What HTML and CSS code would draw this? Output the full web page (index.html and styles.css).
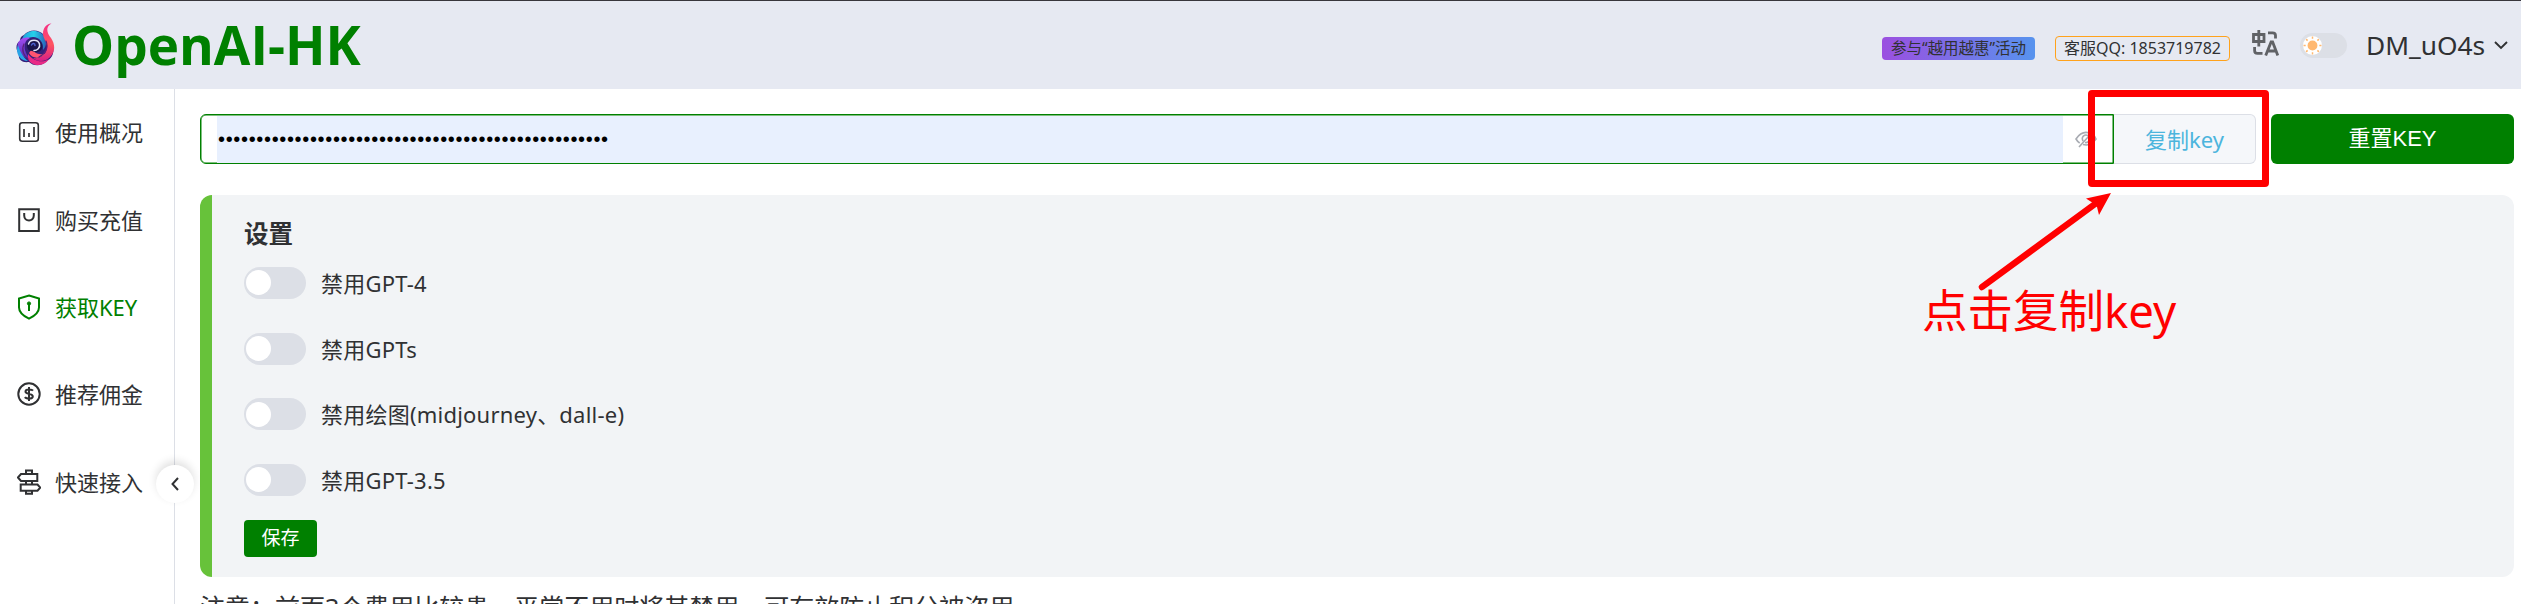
FILE: index.html
```html
<!DOCTYPE html>
<html lang="zh-CN">
<head>
<meta charset="utf-8">
<title>OpenAI-HK</title>
<link rel="stylesheet" href="styles.css">
</head>
<body>
<header class="topbar">
  <svg class="logo" viewBox="0 0 40 44" fill="none" stroke-linecap="round">
    <defs>
      <linearGradient id="cyan" x1="0" y1="0" x2="1" y2="0"><stop offset="0" stop-color="#1f9fd8"/><stop offset=".5" stop-color="#25d0ea"/><stop offset="1" stop-color="#2b62b8"/></linearGradient>
      <linearGradient id="pink" x1="0" y1="0" x2="0" y2="1"><stop offset="0" stop-color="#f52f86"/><stop offset=".55" stop-color="#ff5560"/><stop offset="1" stop-color="#d81d86"/></linearGradient>
      <linearGradient id="violet" x1="0" y1="0" x2="0" y2="1"><stop offset="0" stop-color="#a64df2"/><stop offset="1" stop-color="#4a2bb0"/></linearGradient>
    </defs>
    <path d="M8 12C13 6 23 6 28 12L36 20C39 28 37 35 31 38C25 44 17 43 13 39C5 40 2 36 3 31C-1 26 0 20 4 18C4 15 5 13 8 12Z" fill="#34207a"/>
    <path d="M7 14C12 6 25 6 29 15C31 20 30 24 27 27C28 19 23 14 17 14C13 14 9 16 6 20C5 18 6 16 7 14Z" fill="url(#cyan)"/>
    <path d="M35.500 .5C29 4 31 10 35 15C41 24 38 33 30 37C25 39 20 38 17 35C25 36 31 31 31 24C31 19 27 15 27 11C27 5 30 1 35.500 .5Z" fill="url(#pink)"/>
    <path d="M2 25C0 18 7 13 14 15C9 17 8 22 9 27C10 31 12 34 15 36C7 35 3 31 2 25Z" fill="url(#violet)"/>
    <path d="M2 22C-1 29 3 38 12 38C8 35 5 31 2 22Z" fill="#28a4e8"/>
    <path d="M12 36C16 44 28 44 33 36C27 40 18 39 12 31Z" fill="#e92a86"/>
    <path d="M13 30C16 36 24 36 29 31C25 32 19 31 16 26Z" fill="#ff5470"/>
    <path d="M8 21C5 27 8 33 12 36M30 18C33 25 29 31 23 34" stroke="#5b1f79" stroke-width="1.200"/>
    <path d="M11 22C12 15 23 14 26 21C28 28 21 31 16 28C12 28 11 25 11 22Z" fill="#1b164c"/>
    <path d="M12.500 21C14 16 22 16 23.500 21C24.500 25 21 27.500 18 27.500" stroke="#e7e9fb" stroke-width="1.500"/>
    <path d="M15.500 22C16.500 20 19 20 19 22.500" stroke="#4c62cf" stroke-width="1.500"/>
  </svg>
  <h1 class="brand">OpenAI-HK</h1>
  <div class="tools">
    <a class="promo">参与“越用越惠”活动</a>
    <span class="qq">客服QQ: 1853719782</span>
    <svg class="lang" viewBox="0 0 27 26" fill="none" stroke="#606266" stroke-width="2.8">
      <path d="M1.5 4.5H12V11.5H1.5ZM6.8 0V16.5"/>
      <path d="M16 2.8H20.5Q23.5 2.8 23.5 5.5V8.5M2.6 17V20.5Q2.6 23.4 5.5 23.4H10.5"/>
      <path d="M13.7 25.5L19.1 12H20.6L25.8 25.5M16 21H23.5"/>
    </svg>
    <span class="theme"><svg viewBox="0 0 19 19" stroke="#ffb870" stroke-width="1.5"><circle cx="9.5" cy="9.5" r="4.2" fill="#ffb870"/><path d="M9.5 .5V2.7M9.5 16.3V18.5M.5 9.5H2.7M16.3 9.5H18.5M3.1 3.1L4.6 4.6M14.4 14.4L15.9 15.9M3.1 15.9L4.6 14.4M14.4 4.6L15.9 3.1"/></svg></span>
    <span class="user">DM_uO4s</span>
    <svg class="caret" viewBox="0 0 14 9" fill="none" stroke="#303133" stroke-width="1.9"><path d="M1 1L7 7L13 1"/></svg>
  </div>
</header>
<div class="body">
  <nav class="side">
    <a class="item"><svg viewBox="0 0 24 24"><rect x="2.7" y="2.7" width="18.6" height="18.6" rx="2.5" stroke-width="1.6"/><path d="M7 9V17M12 13V17M17 7V17" stroke-width="1.7"/></svg>使用概况</a>
    <a class="item"><svg viewBox="0 0 24 24"><path d="M2.2 1.2H21.8V23H2.2Z"/><path d="M7.2 5V7.5C7.2 14 16.8 14 16.8 7.5V5"/></svg>购买充值</a>
    <a class="item active"><svg viewBox="0 0 24 26"><path d="M12 1.5L22 4.5V13.5C22 18.5 17.5 22 12 24.7C6.500 22 2 18.500 2 13.500V4.500Z"/><path d="M12 10V17"/><circle cx="12" cy="9.500" r="1.600" fill="currentColor" stroke-width="1"/></svg>获取KEY</a>
    <a class="item"><svg viewBox="0 0 24 24"><circle cx="12" cy="12" r="10.700"/><path d="M16 8.700C15 7.300 8.500 6.800 8.500 9.700C8.500 12.300 15.800 11.300 15.800 14.400C15.800 17.300 9 17 8 15M12 5V19"/></svg>推荐佣金</a>
    <a class="item"><svg viewBox="0 0 24 26" stroke-width="1.700"><path d="M9 5V1.500H15V5M4 5H20.300V12H4L.9 8.500ZM9 12V15.500M15 12V15.500M3.700 15.500H20.500L23.200 18.600L20.500 21.700H3.700ZM9 21.700V24.800H15V21.700"/></svg>快速接入</a>
    <button class="fold"><svg viewBox="0 0 8 14" fill="none" stroke="#303133" stroke-width="2"><path d="M7 1L1.500 7L7 13"/></svg></button>
  </nav>
  <main class="content">
    <div class="keyrow">
      <div class="field">
        <div class="secret">•••••••••••••••••••••••••••••••••••••••••••••••••••</div>
        <svg class="eye" viewBox="0 0 22 18" fill="none" stroke="#a8abb2" stroke-width="1.600"><path d="M14.500 3C8.500 1 4 4.500 1 9C2 10.800 3.200 12 4.700 13M18 4.700C19.500 6 20.500 7.500 21 9C17.500 14 13 16 8 14.600M18.500 1L4 17M8 11C5.800 7 9.500 4 13 5.500M14.500 8C15 11 12.500 13 10 12.500"/></svg>
      </div>
      <button class="copy">复制key</button>
      <button class="reset">重置KEY</button>
    </div>
    <section class="card">
      <h2 class="heading">设置</h2>
      <label class="option"><span class="switch"></span>禁用GPT-4</label>
      <label class="option"><span class="switch"></span>禁用GPTs</label>
      <label class="option"><span class="switch"></span>禁用绘图(midjourney、dall-e)</label>
      <label class="option"><span class="switch"></span>禁用GPT-3.5</label>
      <button class="save">保存</button>
    </section>
    <p class="note">注意：前面3个费用比较贵，平常不用时将其禁用，可有效防止积分被盗用</p>
  </main>
</div>
<div class="marker"></div>
<svg class="arrow" viewBox="0 0 140 104"><path d="M7 97L120 14" stroke="#f00" stroke-width="6.500" stroke-linecap="round"/><path d="M136 3L111 8.500L118 13L122 17L124 25Z" fill="#f00"/></svg>
<div class="callout">点击复制key</div>
</body>
</html>
```
FILE: styles.css
```css
* { box-sizing: border-box; }
body {
  margin: 0;
  position: relative;
  width: 2521px;
  height: 604px;
  overflow: hidden;
  background: #fff;
  color: #303133;
  font: 22px/30px "Noto Sans", "Noto Sans CJK SC", sans-serif;
  white-space: nowrap;
}
svg { display: block; flex: none; }
button { border: 0; padding: 0; margin: 0; font: inherit; color: inherit; background: none; }

.topbar {
  display: flex;
  align-items: center;
  height: 89px;
  padding-left: 16px;
  border-top: 1px solid #38363c;
  background: #e6e9f2;
}
.logo { width: 40px; height: 44px; }
.brand { margin: 0 0 0 16px; font: 700 53px/72px "Open Sans", sans-serif; color: green; }
.tools { display: flex; align-items: center; margin-left: auto; padding-right: 13px; height: 88px; }
.promo {
  width: 153px; height: 23px; margin-top: 7px; border-radius: 4px;
  background: linear-gradient(90deg, #9b4fe0, #5793ee);
  font-size: 15.500px; line-height: 23px; text-align: center;
}
.qq {
  width: 175px; height: 25px; margin: 7px 0 0 20px; border: 1px solid #ffa21c; border-radius: 4px;
  font-size: 16px; line-height: 23px; text-align: center;
}
.lang { width: 27px; height: 26px; margin: -5px 0 0 22px; }
.theme { width: 47px; height: 25px; margin-left: 21px; padding: 3px; border-radius: 13px; background: #dcdfe6; }
.theme svg { width: 19px; height: 19px; border-radius: 50%; background: #fff; }
.user { width: 118px; margin-left: 19px; font-size: 26.300px; line-height: 40px; }
.caret { width: 14px; height: 9px; margin-left: 10px; }

.body { display: flex; height: 515px; }
.side { position: relative; width: 175px; border-right: 1px solid #dcdfe6; }
.item { display: flex; align-items: center; height: 87.400px; padding: 0 0 1px 17px; gap: 14px; }
.item svg { width: 24px; height: 26px; fill: none; stroke: currentColor; stroke-width: 2; }
.active { color: green; }
.fold {
  position: absolute; right: -20px; top: 376px;
  display: flex; align-items: center; justify-content: center;
  width: 38px; height: 38px; border-radius: 50%; background: #fff;
  box-shadow: 0 -4px 9px rgba(0, 0, 0, .12);
}
.fold svg { width: 8px; height: 14px; }

.content { flex: 1; padding: 25px 7px 0 25px; }
.keyrow { display: flex; height: 50px; }
.field {
  display: flex; align-items: center; width: 1914px; padding: 0 16px;
  border: 1px solid green; border-radius: 6px 0 0 6px;
  box-shadow: inset 0 0 0 .5px green;
}
.secret {
  width: 1846px; height: 47px; padding-left: 1px; background: #e8f0fe; color: #000;
  font: 20px/47px "Liberation Sans", sans-serif; letter-spacing: .66px;
}
.eye { width: 22px; height: 18px; margin-left: 12px; }
.copy {
  width: 142px; border: 1px solid #dcdfe6; border-left: 0; border-radius: 0 6px 6px 0;
  background: #f5f7fa; color: #4cb5dd;
}
.reset {
  flex: 1; margin-left: 15px; border-radius: 6px; background: green; color: #fff;
  font-family: "Liberation Sans", "Noto Sans CJK SC", sans-serif;
}
.card {
  height: 382px; margin-top: 31px; padding: 23px 32px 0;
  border-left: 12px solid #67c23a; border-radius: 12px; background: #f2f4f6;
}
.heading { margin: 0; font-size: 24.500px; line-height: 32px; }
.option { display: flex; align-items: center; gap: 15px; height: 65.700px; letter-spacing: .22px; }
.switch { width: 62px; height: 32px; padding: 3.500px 2px; border-radius: 16px; background: #dcdfe6; }
.switch::before { content: ""; display: block; width: 25px; height: 25px; border-radius: 50%; background: #fff; }
.save { width: 73px; height: 37px; margin-top: 7px; border-radius: 4px; background: green; color: #fff; font-size: 19px; }
.note { margin: 12px 0 0; font-size: 25px; line-height: 36px; }

.marker { position: absolute; left: 2088px; top: 90px; width: 181px; height: 97px; border: 7px solid #f00; border-radius: 4px; }
.arrow { position: absolute; left: 1975px; top: 190px; width: 140px; height: 104px; }
.callout { position: absolute; left: 1922px; top: 278px; color: #f00; font-size: 45.500px; line-height: 64px; }
```
